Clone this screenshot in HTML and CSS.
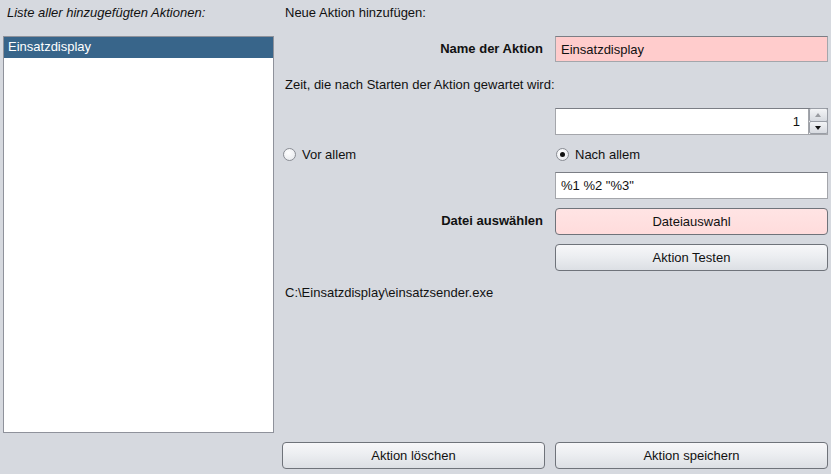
FILE: index.html
```html
<!DOCTYPE html>
<html>
<head>
  <meta charset="utf-8">
  <title>Aktionen</title>
  <link rel="stylesheet" href="styles.css">
</head>
<body>
  <div class="app">
    <div class="left">
      <div class="caption italic">Liste aller hinzugefügten Aktionen:</div>
      <ul class="list">
        <li class="selected">Einsatzdisplay</li>
      </ul>
    </div>

    <div class="right">
      <div class="caption span">Neue Aktion hinzufügen:</div>

      <div class="label">Name der Aktion</div>
      <div class="field"><input class="text pink" type="text" value="Einsatzdisplay"></div>

      <div class="plain span">Zeit, die nach Starten der Aktion gewartet wird:</div>

      <div></div>
      <div class="field">
        <div class="spinner">
          <input class="text num" type="text" value="1">
          <div class="arrows">
            <span class="up"></span>
            <span class="down"></span>
          </div>
        </div>
      </div>

      <div class="radio-cell"><span class="radio"></span>Vor allem</div>
      <div class="radio-cell"><span class="radio on"></span>Nach allem</div>

      <div></div>
      <div class="field"><input class="text" type="text" value='%1 %2 "%3"'></div>

      <div class="label">Datei auswählen</div>
      <div class="field"><button class="btn btn-pink">Dateiauswahl</button></div>

      <div></div>
      <div class="field"><button class="btn">Aktion Testen</button></div>

      <div class="plain span">C:\Einsatzdisplay\einsatzsender.exe</div>

      <div class="filler span"></div>

      <div class="field"><button class="btn">Aktion löschen</button></div>
      <div class="field"><button class="btn">Aktion speichern</button></div>
    </div>
  </div>
</body>
</html>
```

FILE: styles.css
```css
html, body {
  margin: 0;
  height: 100%;
}
body {
  background: #d6d9df;
  font-family: "Liberation Sans", Arial, sans-serif;
  font-size: 13px;
  color: #111;
}
.app {
  display: flex;
  height: 474px;
  box-sizing: border-box;
  padding: 0 3px 5px 3px;
}

/* left column: list of saved actions */
.left {
  width: 271px;
  display: flex;
  flex-direction: column;
}
.caption {
  height: 26px;
  line-height: 26px;
  padding-left: 4px;
}
.italic {
  font-style: italic;
  margin-bottom: 10px;
}
.list {
  margin: 0;
  padding: 0;
  list-style: none;
  height: 395px;
  background: #fff;
  border: 1px solid #8f929b;
}
.list li {
  height: 21px;
  line-height: 20px;
  padding-left: 4px;
}
.list li.selected {
  background: #38658a;
  color: #fff;
}

/* right column: form */
.right {
  flex: 1;
  margin-left: 8px;
  display: grid;
  grid-template-columns: 1fr 273px;
  grid-template-rows: 36px 36px 36px 36px 28px 36px 36px 36px 26px 1fr 27px;
  column-gap: 10px;
}
.span {
  grid-column: 1 / 3;
}
.right .caption {
  padding-left: 3px;
}
.label {
  font-weight: bold;
  text-align: right;
  height: 26px;
  line-height: 26px;
  padding-right: 2px;
}
.plain {
  height: 26px;
  line-height: 26px;
  padding-left: 3px;
}
.field {
  display: flex;
}
.field > * {
  flex: 1;
}

.text {
  box-sizing: border-box;
  height: 27px;
  width: 100%;
  margin: 0;
  padding: 0 5px;
  border: 1px solid #a4a6ab;
  border-top-color: #7b7e85;
  background: #fff;
  font: inherit;
  color: #111;
  outline: none;
}
.text.pink {
  height: 26px;
  background: #ffcccc;
}

.spinner {
  display: flex;
  height: 27px;
  border: 1px solid #a4a6ab;
  border-top-color: #7b7e85;
  box-sizing: border-box;
  background: #fff;
}
.spinner .num {
  flex: 1;
  border: none;
  height: 25px;
  text-align: right;
  padding-right: 8px;
}
.arrows {
  width: 18px;
  display: flex;
  flex-direction: column;
  border-left: 1px solid #a4a6ab;
}
.arrows span {
  flex: 1;
  position: relative;
  background: linear-gradient(#f3f4f6, #d7dae0);
  border-radius: 2px;
  border: 1px solid #9a9ea6;
  margin: -1px -1px 0 0;
}
.arrows span::after {
  content: "";
  position: absolute;
  left: 5px;
  top: 4px;
  border-left: 3px solid transparent;
  border-right: 3px solid transparent;
}
.arrows .up::after {
  border-bottom: 4px solid #9a9ca1;
}
.arrows .down::after {
  border-top: 4px solid #111;
}

.radio-cell {
  display: flex;
  align-items: center;
  height: 20px;
  padding-left: 1px;
}
.radio {
  width: 11px;
  height: 11px;
  border-radius: 50%;
  border: 1px solid #8a8d94;
  background: radial-gradient(circle at 40% 35%, #ffffff, #e3e5ea);
  margin-right: 6px;
  position: relative;
}
.radio.on::after {
  content: "";
  position: absolute;
  left: 3px;
  top: 3px;
  width: 5px;
  height: 5px;
  border-radius: 50%;
  background: #111;
}

.btn {
  box-sizing: border-box;
  height: 27px;
  margin: 0;
  border: 1px solid #6f737a;
  border-radius: 4px;
  background: linear-gradient(#f7f7f9 0%, #eceef1 45%, #dcdfe4 100%);
  font: inherit;
  color: #111;
}
.btn-pink {
  background: linear-gradient(#ffe4e4 0%, #ffdcdc 100%);
}
.filler {
  min-height: 0;
}
```
